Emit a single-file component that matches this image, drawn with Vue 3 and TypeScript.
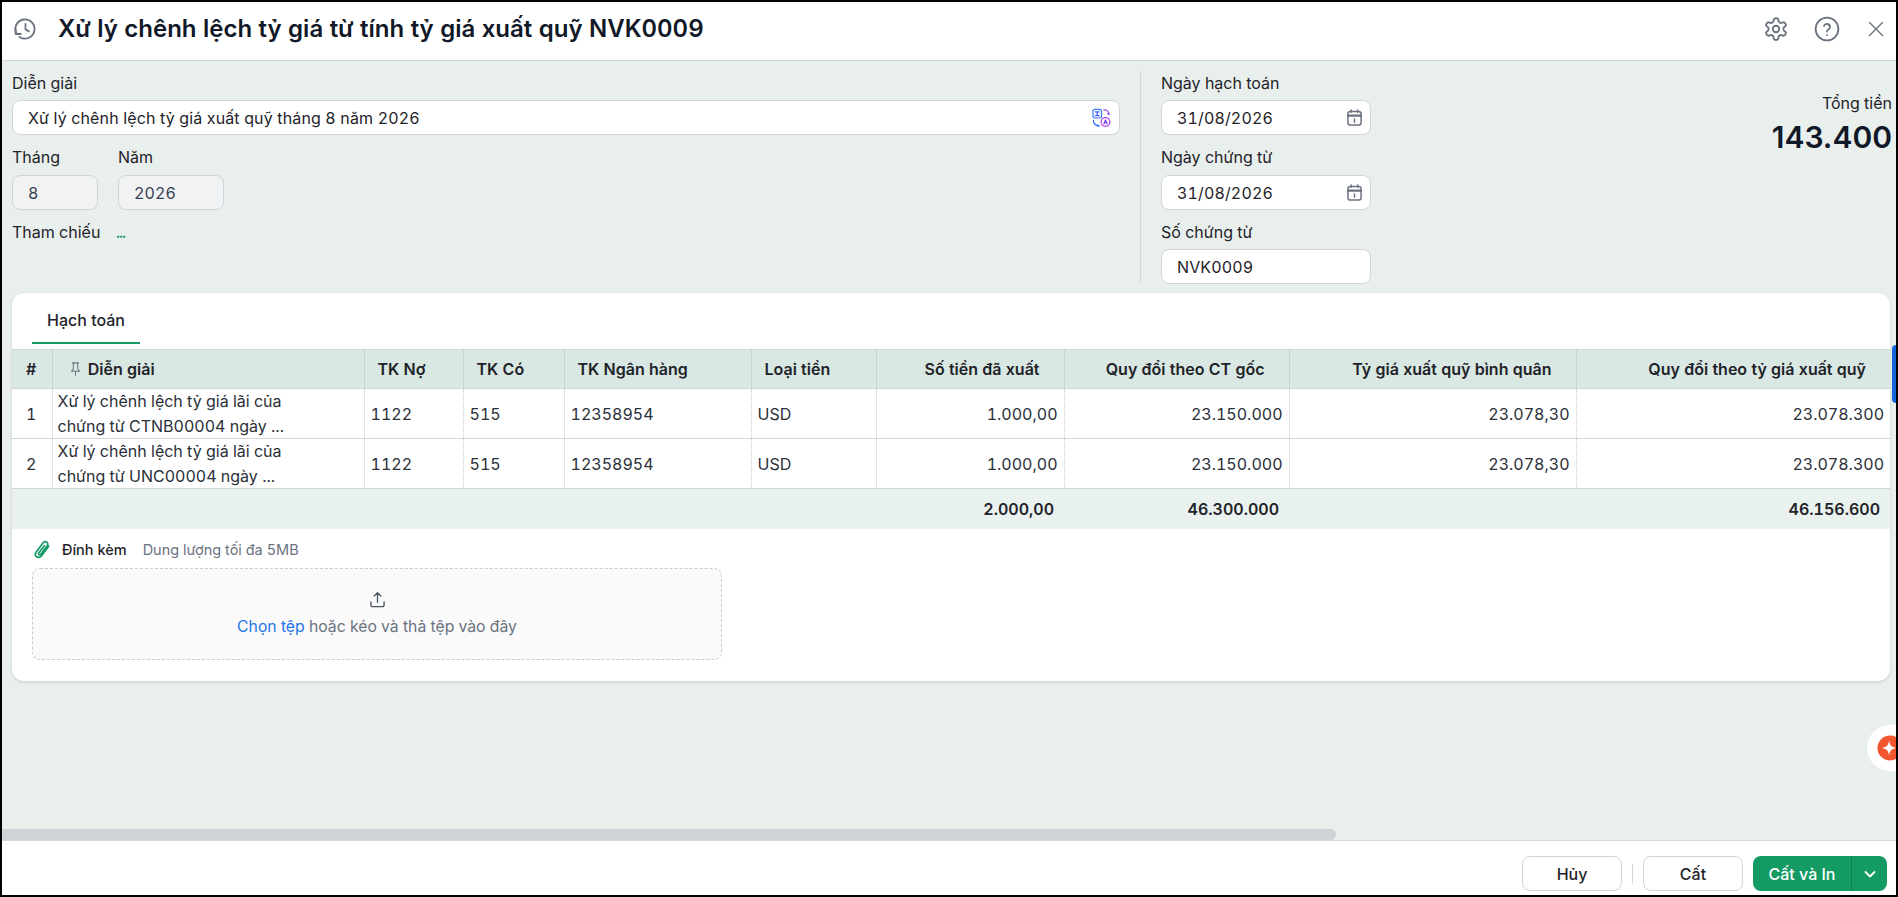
<template>
  <div class="frame">
    <header class="top-bar">
      <svg class="history" viewBox="0 0 24 24" width="24" height="24" fill="none" stroke="#6b7280" stroke-width="1.8" stroke-linecap="round" stroke-linejoin="round">
        <path d="M3.400 16.400A9.600 9.600 0 1 1 6.600 20" />
        <path d="M2.600 11.800v5.200h5.200" />
        <path d="M12.500 7v5.400l3.400 2" />
      </svg>
      <h1>Xử lý chênh lệch tỷ giá từ tính tỷ giá xuất quỹ NVK0009</h1>
      <div class="top-actions">
        <svg class="gear" viewBox="0 0 24 24" width="26" height="26" fill="none" stroke="#6b7280" stroke-width="1.7" stroke-linecap="round" stroke-linejoin="round">
          <path d="M12.220 2h-.44a2 2 0 0 0-2 2v.18a2 2 0 0 1-1 1.730l-.43.25a2 2 0 0 1-2 0l-.15-.08a2 2 0 0 0-2.730.73l-.22.38a2 2 0 0 0 .73 2.730l.15.1a2 2 0 0 1 1 1.720v.51a2 2 0 0 1-1 1.740l-.15.09a2 2 0 0 0-.73 2.730l.22.38a2 2 0 0 0 2.730.73l.15-.08a2 2 0 0 1 2 0l.43.25a2 2 0 0 1 1 1.730V20a2 2 0 0 0 2 2h.44a2 2 0 0 0 2-2v-.18a2 2 0 0 1 1-1.730l.43-.25a2 2 0 0 1 2 0l.15.08a2 2 0 0 0 2.730-.73l.22-.39a2 2 0 0 0-.73-2.730l-.15-.08a2 2 0 0 1-1-1.740v-.5a2 2 0 0 1 1-1.740l.15-.09a2 2 0 0 0 .73-2.730l-.22-.38a2 2 0 0 0-2.730-.73l-.15.08a2 2 0 0 1-2 0l-.43-.25a2 2 0 0 1-1-1.730V4a2 2 0 0 0-2-2z" />
          <circle cx="12" cy="12" r="3" />
        </svg>
        <svg class="help" viewBox="0 0 24 24" width="26" height="26" fill="none" stroke="#6b7280" stroke-width="1.7" stroke-linecap="round" stroke-linejoin="round">
          <circle cx="12" cy="12" r="10.500" />
          <path d="M9.200 9.200a2.900 2.900 0 0 1 5.600 1c0 1.900-2.800 2.400-2.800 4.200" />
          <path d="M12 17.600v.1" />
        </svg>
        <svg viewBox="0 0 16 16" width="16" height="16" fill="none" stroke="#6b7280" stroke-width="1.4" stroke-linecap="round">
          <path d="M1.500 1.500l13 13M14.500 1.500l-13 13" />
        </svg>
      </div>
    </header>

    <main class="content">
      <section class="form-area">
        <div class="col-left">
          <label class="lbl">Diễn giải</label>
          <div class="inp inp-full">
            <span>Xử lý chênh lệch tỷ giá xuất quỹ tháng 8 năm 2026</span>
            <svg viewBox="0 0 20 20" width="19" height="20" fill="none" stroke-width="1.3" stroke-linecap="round" stroke-linejoin="round">
              <rect x="1" y="1" width="9" height="9" rx="2" stroke="#3f7bff" />
              <path d="M3.500 3.500h4M5.500 3.500v4M3.500 7.500h4" stroke="#3f5bff" />
              <circle cx="14.200" cy="14.200" r="4.600" stroke="#b13df0" />
              <path d="M12.500 16.200l1.700-4 1.700 4M13.200 15h2" stroke="#7a3df0" />
              <path d="M12.500 1.500c3 0 5.500 2 5.500 5M18 6.500l-1.500-1.200" stroke="#a03cf0" />
              <path d="M1.500 12.500c0 3 2.500 6 6 6M7.500 18.500l-1.400-1.300" stroke="#2f6bff" />
            </svg>
          </div>
          <div class="period">
            <div>
              <label class="lbl lbl-low">Tháng</label>
              <div class="inp inp-month inp-off">8</div>
            </div>
            <div>
              <label class="lbl lbl-low">Năm</label>
              <div class="inp inp-year inp-off">2026</div>
            </div>
          </div>
          <div class="ref-row">
            <label class="lbl">Tham chiếu</label>
            <span class="dots">...</span>
          </div>
        </div>

        <div class="col-dates">
          <template v-for="(f, i) in dateFields" :key="f.label">
            <label class="lbl" :class="{ 'lbl-low': i === 1 }">{{ f.label }}</label>
            <div class="inp inp-date" :class="{ 'inp-first': i === 0 }">
              <span>{{ f.value }}</span>
              <svg v-if="f.date" viewBox="0 0 16 18" width="15" height="17" fill="none" stroke="#6b7280" stroke-width="1.600" stroke-linecap="round">
                <rect x="1" y="2.500" width="14" height="14.500" rx="2.500" />
                <path d="M1 7h14" stroke-width="2.600" />
                <path d="M4.500 1v2.500M11.500 1v2.500M8 10.500v3.500" />
              </svg>
            </div>
          </template>
        </div>

        <div class="col-total">
          <div class="total-label">Tổng tiền</div>
          <div class="total-value">143.400</div>
        </div>
      </section>

      <section class="card">
        <div class="tabs"><span class="tab">Hạch toán</span></div>
        <table class="grid">
          <colgroup>
            <col v-for="(w, i) in colWidths" :key="i" :style="{ width: w + 'px' }" />
          </colgroup>
          <thead>
            <tr>
              <th class="c">#</th>
              <th class="pin-head">
                <svg viewBox="0 0 12 16" width="11" height="14" fill="none" stroke="#6b7280" stroke-width="1.200" stroke-linecap="round" stroke-linejoin="round">
                  <path d="M2.500 1h7M3.500 1v7L1.500 10.500h9L8.500 8V1M6 10.500V15" />
                </svg>
                Diễn giải
              </th>
              <th>TK Nợ</th>
              <th>TK Có</th>
              <th>TK Ngân hàng</th>
              <th>Loại tiền</th>
              <th class="r">Số tiền đã xuất</th>
              <th class="r">Quy đổi theo CT gốc</th>
              <th class="r">Tỷ giá xuất quỹ bình quân</th>
              <th class="r">Quy đổi theo tỷ giá xuất quỹ</th>
            </tr>
          </thead>
          <tbody>
            <tr v-for="(row, i) in rows" :key="i">
              <td class="c">{{ i + 1 }}</td>
              <td class="desc">Xử lý chênh lệch tỷ giá lãi của<br />chứng từ {{ row.doc }} ngày ...</td>
              <td>1122</td>
              <td>515</td>
              <td>12358954</td>
              <td>USD</td>
              <td class="n">1.000,00</td>
              <td class="n">23.150.000</td>
              <td class="n">23.078,30</td>
              <td class="n">23.078.300</td>
            </tr>
          </tbody>
          <tfoot>
            <tr>
              <td colspan="6"></td>
              <td class="n">2.000,00</td>
              <td class="n">46.300.000</td>
              <td></td>
              <td class="n">46.156.600</td>
            </tr>
          </tfoot>
        </table>

        <div class="attach">
          <div class="attach-head">
            <svg viewBox="0 0 18 20" width="17" height="19" fill="none" stroke="#149a63" stroke-width="1.800" stroke-linecap="round" stroke-linejoin="round">
              <path d="M15.500 6.500L8 16.500c-1.500 2-4 2.300-5.500 1.100S1 14.300 2.500 12.300l7-9.300c1-1.400 2.800-1.700 4-.8s1.300 2.600.3 4l-6.600 8.800c-.5.700-1.400.9-2 .4s-.6-1.300-.1-2L11 6" />
            </svg>
            <span class="attach-title">Đính kèm</span>
            <span class="attach-hint">Dung lượng tối đa 5MB</span>
          </div>
          <div class="drop">
            <svg viewBox="0 0 18 18" width="17" height="17" fill="none" stroke="#4b5563" stroke-width="1.400" stroke-linecap="round" stroke-linejoin="round">
              <path d="M9 12V2M5.500 5.300L9 1.800l3.500 3.500M2 11.500v3a2 2 0 0 0 2 2h10a2 2 0 0 0 2-2v-3" />
            </svg>
            <div class="drop-text"><span class="link">Chọn tệp</span> hoặc kéo và thả tệp vào đây</div>
          </div>
        </div>
      </section>

      <div class="hscroll"></div>
      <div class="side-handle"></div>
      <div class="ai-btn">
        <svg viewBox="0 0 28 28" width="26" height="26">
          <circle cx="14" cy="14" r="13.500" fill="#f2562f" />
          <path d="M13 6c.8 5 2.500 7 7.500 8-5 1-6.700 3-7.500 8-.8-5-2.500-7-7.500-8 5-1 6.700-3 7.500-8z" fill="#fff" />
        </svg>
      </div>
    </main>

    <footer class="bottom-bar">
      <button class="btn">Hủy</button>
      <span class="sep"></span>
      <button class="btn">Cất</button>
      <div class="split">
        <button class="split-main">Cất và In</button>
        <button class="split-more">
          <svg viewBox="0 0 14 14" width="14" height="14" fill="none" stroke="#fff" stroke-width="1.800" stroke-linecap="round" stroke-linejoin="round">
            <path d="M2.500 5l4.500 4.500L11.500 5" />
          </svg>
        </button>
      </div>
    </footer>
  </div>
</template>

<script setup lang="ts">
const colWidths = [40, 312, 99, 101, 187, 125, 188, 225, 287, 314];

const dateFields = [
  { label: "Ngày hạch toán", value: "31/08/2026", date: true },
  { label: "Ngày chứng từ", value: "31/08/2026", date: true },
  { label: "Số chứng từ", value: "NVK0009", date: false },
];

const rows = [{ doc: "CTNB00004" }, { doc: "UNC00004" }];
</script>

<style>
html,
body {
  margin: 0;
  overflow: hidden;
}
</style>

<style scoped>
.frame {
  box-sizing: border-box;
  width: 1898px;
  height: 897px;
  border: 2px solid #000;
  display: flex;
  flex-direction: column;
  background: #e9efed;
  font-family: Inter, "Noto Sans", sans-serif;
  font-size: 16px;
  font-variant-numeric: tabular-nums;
  color: #1f2329;
  overflow: hidden;
}
.top-bar {
  flex: none;
  background: #fff;
  border-bottom: 1px solid #d3d8dc;
  display: flex;
  align-items: center;
  padding: 2px 12px 6px 11px;
  height: 50px;
}
.history {
  flex: none;
  margin-right: 21px;
}
h1 {
  margin: 0;
  font-size: 24px;
  font-weight: 600;
  color: #111827;
  line-height: 32px;
}
.top-actions {
  margin-left: auto;
  display: flex;
  align-items: center;
}
.gear {
  margin-right: 25px;
}
.help {
  margin-right: 28px;
}
.content {
  flex: 1;
  position: relative;
  padding: 10px 6px 0 10px;
  min-height: 0;
}
.form-area {
  display: flex;
  height: 213px;
}
.col-left {
  width: 1108px;
  padding-top: 2px;
}
.lbl {
  display: block;
  line-height: 20px;
  margin-bottom: 7px;
  color: #1f2329;
}
.lbl-low {
  margin-bottom: 8px;
}
.inp {
  box-sizing: border-box;
  height: 35px;
  border: 1px solid #d0d5da;
  border-radius: 8px;
  background: #fff;
  display: flex;
  align-items: center;
  justify-content: space-between;
  padding: 0 15px;
  color: #1f2329;
  letter-spacing: 0.14px;
  margin-bottom: 12px;
}
.inp-full {
  padding-right: 8px;
}
.period {
  display: flex;
  gap: 20px;
}
.inp-off {
  background: #f1f2f4;
  color: #374151;
}
.inp-month {
  width: 86px;
}
.inp-year {
  width: 106px;
}
.ref-row {
  display: flex;
  gap: 16px;
}
.dots {
  color: #149a63;
  font-weight: 800;
  line-height: 23px;
  font-size: 13px;
  letter-spacing: -0.5px;
}
.col-dates {
  margin-left: 20px;
  padding: 2px 0 0 20px;
  border-left: 1px solid #d3d8dc;
  width: 210px;
}
.inp-date {
  padding-right: 8px;
}
.col-total {
  flex: 1;
  text-align: right;
  margin-right: -2px;
  padding-top: 22px;
}
.total-label {
  line-height: 20px;
}
.total-value {
  font-size: 30px;
  font-weight: 600;
  font-variant-numeric: normal;
  line-height: 36px;
  margin-top: 6px;
  color: #111827;
}
.card {
  margin-top: 9px;
  background: #fff;
  border-radius: 12px;
  box-shadow: 0 1px 3px rgba(0, 0, 0, 0.14);
  overflow: hidden;
  height: 388px;
}
.tabs {
  height: 56px;
  display: flex;
  padding-left: 20px;
}
.tab {
  box-sizing: border-box;
  width: 108px;
  height: 51px;
  text-align: center;
  line-height: 54px;
  font-weight: 500;
  color: #1f2329;
  border-bottom: 2px solid #149a63;
}
.grid {
  width: 1878px;
  table-layout: fixed;
  border-collapse: collapse;
}
th {
  height: 38px;
  padding: 0 0 0 13px;
  background: #d9e8e2;
  font-weight: 600;
  text-align: left;
  color: #1f2329;
  border-top: 1px solid #cfd6d8;
  border-bottom: 1px solid #cfd6d8;
  border-right: 1px solid #c9d3d2;
  white-space: nowrap;
}
th.c {
  padding-left: 14px;
}
th.pin-head {
  padding-left: 17px;
}
.pin-head svg {
  vertical-align: -1px;
  margin-right: 3px;
}
th.r {
  text-align: right;
  padding: 0 24px 0 0;
}
th:last-child,
tbody td:last-child {
  border-right: none;
}
tbody td {
  height: 49px;
  padding: 0 6px;
  color: #2a2f38;
  border-bottom: 1px solid #d0d5da;
  border-right: 1px dotted #c3c9ce;
  white-space: nowrap;
}
tbody td.c {
  padding-left: 14px;
}
tbody td.desc {
  line-height: 24.5px;
  padding-left: 5px;
}
tbody td.n {
  text-align: right;
}
tfoot td {
  height: 40px;
  padding: 0;
  background: #eaf2ef;
  font-weight: 600;
  color: #1f2329;
}
tfoot td.n {
  text-align: right;
  padding-right: 10px;
}
.attach {
  padding: 8px 0 0 20px;
}
.attach-head {
  display: flex;
  align-items: center;
  height: 24px;
  font-size: 14.5px;
}
.attach-head svg {
  margin-left: 2px;
  margin-right: 11px;
}
.attach-title {
  font-weight: 500;
  color: #1f2329;
  margin-right: 16px;
}
.attach-hint {
  color: #6b7280;
}
.drop {
  box-sizing: border-box;
  margin-top: 7px;
  width: 690px;
  height: 92px;
  border: 1px dashed #c9cdd2;
  border-radius: 8px;
  background: #fafafa;
  display: flex;
  flex-direction: column;
  align-items: center;
  padding-top: 22px;
}
.drop-text {
  margin-top: 9px;
  font-size: 15.75px;
  color: #6b7280;
}
.link {
  color: #1f74e8;
}
.hscroll {
  position: absolute;
  left: 0;
  bottom: 0;
  width: 1334px;
  height: 11px;
  background: #cfd3d8;
  border-radius: 0 6px 6px 0;
}
.side-handle {
  position: absolute;
  right: 0;
  top: 284px;
  width: 4px;
  height: 58px;
  background: #1565d8;
  border-radius: 4px 0 0 4px;
}
.ai-btn {
  position: absolute;
  right: 0;
  top: 664px;
  width: 29px;
  height: 46px;
  background: #fff;
  border-radius: 23px 0 0 23px;
  display: flex;
  align-items: center;
  padding-left: 10px;
  box-sizing: border-box;
  overflow: hidden;
}
.ai-btn svg {
  flex: none;
}
.bottom-bar {
  flex: none;
  height: 55px;
  box-sizing: border-box;
  background: #fff;
  border-top: 1px solid #d3d8dc;
  display: flex;
  align-items: flex-start;
  justify-content: flex-end;
  padding: 15px 9px 0 0;
}
.btn {
  box-sizing: border-box;
  width: 100px;
  height: 35px;
  border: 1px solid #d0d5da;
  border-radius: 8px;
  background: #fff;
  font: 500 16px Inter, "Noto Sans", sans-serif;
  color: #1f2329;
}
.sep {
  width: 1px;
  height: 20px;
  margin: 8px 10px 0;
  background: #d3d8dc;
}
.split {
  display: flex;
  height: 35px;
  margin-left: 10px;
  border-radius: 8px;
  overflow: hidden;
  background: #149a63;
}
.split-main,
.split-more {
  border: none;
  background: none;
  color: #fff;
  font: 500 16px Inter, "Noto Sans", sans-serif;
  padding: 0;
}
.split-main {
  width: 98px;
}
.split-more {
  width: 36px;
  border-left: 1px solid #0e8052;
  display: flex;
  align-items: center;
  justify-content: center;
}
</style>
